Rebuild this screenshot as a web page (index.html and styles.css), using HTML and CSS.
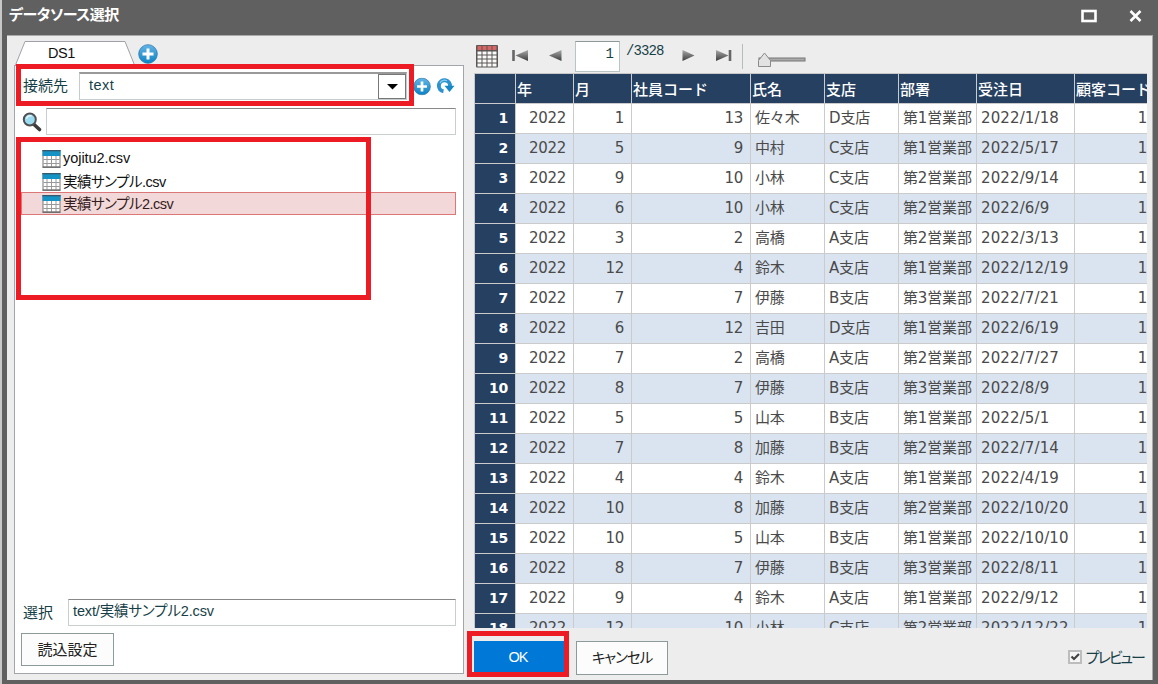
FILE: index.html
```html
<!DOCTYPE html>
<html lang="ja">
<head>
    <meta charset="UTF-8">
    <title>データソース選択</title>
    <link rel="stylesheet" href="styles.css">
</head>
<body>

<svg class="defs" width="0" height="0">
    <defs>
        <linearGradient id="blue" x1="0" y1="0" x2="0" y2="1">
            <stop offset="0" stop-color="#66b4e6"/>
            <stop offset="1" stop-color="#0a83c4"/>
        </linearGradient>
        <linearGradient id="gray" x1="0" y1="0" x2="0" y2="1">
            <stop offset="0" stop-color="#aaa"/>
            <stop offset="1" stop-color="#3c3c3c"/>
        </linearGradient>
        <symbol id="plus" viewBox="0 0 20 20">
            <circle cx="10" cy="10" r="9.3" fill="url(#blue)" stroke="#2878ae" stroke-width="0.8"/>
            <path d="M10 4.5v11M4.5 10h11" stroke="#fff" stroke-width="3"/>
        </symbol>
        <symbol id="table" viewBox="0 0 18 18">
            <rect x="0.5" y="0.5" width="17" height="16.5" fill="#fff" stroke="#777"/>
            <rect x="0" y="0" width="18" height="6" fill="#1593c4"/>
            <rect x="0" y="0" width="18" height="1.3" fill="#35586a"/>
            <path d="M1 9.5h16M1 13.5h16M4.5 6v11M9 6v11M13.5 6v11" stroke="#999"/>
            <path d="M0 17.2h18" stroke="#555"/>
        </symbol>
    </defs>
</svg>

<div class="dialog">
    <div class="titlebar">
        <span class="title">データソース選択</span>
        <svg class="max" width="16" height="14"><rect x="1.5" y="2" width="13" height="10" fill="none" stroke="#fff" stroke-width="2.6"/></svg>
        <svg class="close" width="13" height="14"><path d="M1.5 2l10 10M11.5 2l-10 10" stroke="#fff" stroke-width="2.6"/></svg>
    </div>

    <div class="content">
        <div class="left">
            <div class="tabs">
                <div class="tab">
                    <svg width="120" height="25"><path d="M0.5 25L10 1.5H110L119.5 25" fill="#fff" stroke="#a0a0a8"/></svg>
                    <span>DS1</span>
                </div>
                <svg class="tab-add" width="20" height="20"><use href="#plus"/></svg>
            </div>

            <div class="panel">
                <div class="connect">
                    <span class="label">接続先</span>
                    <div class="select">
                        <span>text</span>
                        <div class="arrow"><svg width="11" height="6"><path d="M0 0h11L5.5 5.5z" fill="#000"/></svg></div>
                    </div>
                    <svg width="18" height="19" viewBox="0 0 20 20"><use href="#plus"/></svg>
                    <svg class="reload" width="19" height="18" viewBox="0 0 19 18">
                        <path d="M7.5 14.3A5.6 5.6 0 1 1 14 9.5" fill="none" stroke="#2d93cf" stroke-width="4"/>
                        <path d="M8.5 8.8h10l-5 6.2z" fill="#1688c8"/>
                        <path d="M4 6A5 5 0 0 1 11 3.8" fill="none" stroke="#8accf0" stroke-width="1.3"/>
                    </svg>
                </div>

                <div class="search">
                    <svg width="20" height="20" viewBox="0 0 20 20">
                        <path d="M11.5 12l6 5.5" stroke="#3c3c3c" stroke-width="3.6" stroke-linecap="round"/>
                        <circle cx="7.8" cy="7.5" r="6" fill="#9bdcf2" stroke="#505050" stroke-width="2"/>
                        <path d="M4.5 6.5a3.8 3.8 0 0 1 5-2.5" stroke="#e4f7fd" stroke-width="1.6" fill="none"/>
                    </svg>
                    <div class="input"></div>
                </div>

                <div class="files">
                    <div class="file"><svg width="19" height="18"><use href="#table"/></svg><span class="en">yojitu2.csv</span></div>
                    <div class="file"><svg width="19" height="18"><use href="#table"/></svg><span>実績サンプル.csv</span></div>
                    <div class="file selected"><svg width="19" height="18"><use href="#table"/></svg><span>実績サンプル2.csv</span></div>
                </div>

                <div class="chosen">
                    <span class="label">選択</span>
                    <div class="input">text/実績サンプル2.csv</div>
                </div>
                <div class="button load">読込設定</div>
            </div>
        </div>

        <div class="right">
            <div class="toolbar">
                <svg class="grid-icon" width="22" height="23" viewBox="0 0 22 23">
                    <rect x="0" y="0" width="22" height="22.5" rx="1" fill="#5d5656"/>
                    <path d="M1.5 3h19" stroke="#d66565" stroke-width="4" stroke-dasharray="4 1"/>
                    <path d="M1.5 8h19M1.5 12h19M1.5 16h19M1.5 20h19" stroke="#fafafa" stroke-width="3" stroke-dasharray="4 1"/>
                </svg>
                <svg class="first" width="17" height="13"><path d="M1.5 1v11" stroke="#666" stroke-width="2.6"/><path d="M16 1v11L3.5 6.5z" fill="url(#gray)"/></svg>
                <svg class="prev" width="13" height="13"><path d="M12.5 1v11L0 6.5z" fill="url(#gray)"/></svg>
                <div class="page">1</div>
                <span class="total">/3328</span>
                <svg class="next" width="13" height="13"><path d="M0.5 1v11L12.5 6.5z" fill="url(#gray)"/></svg>
                <svg class="last" width="17" height="13"><path d="M15 1v11" stroke="#666" stroke-width="2.6"/><path d="M1 1v11L13.5 6.5z" fill="url(#gray)"/></svg>
                <div class="sep"></div>
                <svg class="slider" width="50" height="17" viewBox="0 0 50 17">
                    <rect x="2" y="6" width="46" height="3" fill="#aaa" stroke="#777"/>
                    <path d="M7.5 1L13.5 8.500V14.5H1.500V8.500z" fill="#e2e2e2" stroke="#8a8a8a"/>
                </svg>
            </div>

            <div class="grid" id="grid">
                <div class="row head">
                    <div></div><div>年</div><div>月</div><div>社員コード</div><div>氏名</div><div>支店</div><div>部署</div><div>受注日</div><div>顧客コード</div>
                </div>
            </div>

            <div class="footer">
                <div class="button ok">OK</div>
                <div class="button cancel"><span>キャンセル</span></div>
                <div class="preview">
                    <svg width="14" height="14"><rect x="1" y="1" width="12" height="12" fill="#f6f6f6" stroke="#bdbdbd" stroke-width="2"/><path d="M3.5 6.5l2.5 2.5 5-5" fill="none" stroke="#444" stroke-width="2.2"/></svg>
                    <span>プレビュー</span>
                </div>
            </div>
        </div>
    </div>

    <div class="mark mark-connect"></div>
    <div class="mark mark-files"></div>
    <div class="mark mark-ok"></div>
</div>

<script>
    // 月, 社員コード, 氏名, 支店, 部署, 受注日
    const rows = [
        [1, 13, '佐々木', 'D', 1, '1/18'],
        [5, 9, '中村', 'C', 1, '5/17'],
        [9, 10, '小林', 'C', 2, '9/14'],
        [6, 10, '小林', 'C', 2, '6/9'],
        [3, 2, '高橋', 'A', 2, '3/13'],
        [12, 4, '鈴木', 'A', 1, '12/19'],
        [7, 7, '伊藤', 'B', 3, '7/21'],
        [6, 12, '吉田', 'D', 1, '6/19'],
        [7, 2, '高橋', 'A', 2, '7/27'],
        [8, 7, '伊藤', 'B', 3, '8/9'],
        [5, 5, '山本', 'B', 1, '5/1'],
        [7, 8, '加藤', 'B', 2, '7/14'],
        [4, 4, '鈴木', 'A', 1, '4/19'],
        [10, 8, '加藤', 'B', 2, '10/20'],
        [10, 5, '山本', 'B', 1, '10/10'],
        [8, 7, '伊藤', 'B', 3, '8/11'],
        [9, 4, '鈴木', 'A', 1, '9/12'],
        [12, 10, '小林', 'C', 2, '12/22']
    ];

    const grid = document.getElementById('grid');
    rows.forEach((r, i) => {
        const row = document.createElement('div');
        row.className = 'row';
        const cells = [i + 1, 2022, r[0], r[1], r[2], r[3] + '支店', '第' + r[4] + '営業部', '2022/' + r[5], 1];
        cells.forEach(c => {
            const cell = document.createElement('div');
            cell.textContent = c;
            if (typeof c === 'number') cell.className = 'num';
            row.appendChild(cell);
        });
        grid.appendChild(row);
    });
</script>

</body>
</html>
```

FILE: styles.css
```css
* {
    box-sizing: border-box;
}
body {
    margin: 0;
    width: 1158px;
    height: 684px;
    overflow: hidden;
    font-family: "Liberation Sans", "Noto Sans CJK JP", sans-serif;
    font-size: 15px;
    color: #173f48;
}
svg {
    display: block;
    flex: none;
}
.defs {
    position: absolute;
}
.dialog {
    position: relative;
    height: 684px;
    background-color: #606060;
    border-left: 2px solid #c8c8c8;
    padding: 0 5px 4px;
    display: flex;
    flex-direction: column;
}
.titlebar {
    height: 35px;
    display: flex;
    padding: 0 11px 0 2px;
    color: #fff;
}
.title {
    flex: 1;
    font-weight: bold;
    line-height: 30px;
    font-feature-settings: "palt";
    letter-spacing: -0.5px;
}
.max {
    margin: 9px 32px 0 0;
}
.close {
    margin-top: 9px;
}
.content {
    flex: 1;
    min-height: 0;
    display: flex;
    background-color: #ededed;
    border-top: 1px solid #aaa;
    border-right: 1px solid #aaa;
}

/* left side */
.left {
    width: 457px;
    padding: 4px 0 6px 7px;
    display: flex;
    flex-direction: column;
}
.tabs {
    display: flex;
    height: 25px;
}
.tab {
    display: grid;
    width: 120px;
    margin-left: 1px;
}
.tab > * {
    grid-area: 1 / 1;
}
.tab span {
    padding-left: 33px;
    line-height: 27px;
    font-size: 14.5px;
    letter-spacing: -0.5px;
    color: #111;
}
.tab-add {
    margin: 4px 0 0 3px;
}
.panel {
    flex: 1;
    display: flex;
    flex-direction: column;
    background-color: #fff;
    border: 1px solid #a2a5aa;
    padding: 6px 7px 7px 6px;
}
.connect {
    display: flex;
    height: 28px;
}
.label {
    padding-left: 2px;
    line-height: 28px;
}
.select {
    display: flex;
    width: 328px;
    height: 28px;
    margin: 0 6px 0 11px;
    border: 1px solid #c5cccc;
    border-top: 2px solid #999;
    line-height: 22px;
    justify-content: space-between;
    padding-left: 9px;
    font-size: 14.5px;
}
.select span {
    letter-spacing: 0.5px;
}
.arrow {
    width: 28px;
    border: 1px solid #777;
    display: flex;
    align-items: center;
    justify-content: center;
}
.connect > svg {
    margin-top: 5px;
}
.connect .reload {
    margin-left: 5px;
}
.search {
    display: flex;
    margin-top: 8px;
}
.search svg {
    margin: 4px 4px 0 1px;
}
.input {
    flex: 1;
    height: 27px;
    border: 1px solid #c9cfcf;
    border-top: 1px solid #888;
    line-height: 23px;
    padding-left: 4px;
    font-feature-settings: "palt";
    font-size: 14.5px;
    letter-spacing: -0.15px;
}
.files {
    flex: 1;
    padding-top: 12px;
    color: #111;
}
.file {
    display: flex;
    height: 22.7px;
    align-items: center;
    padding: 1px 0 0 21px;
    font-feature-settings: "palt";
    letter-spacing: -0.5px;
}
.file span {
    position: relative;
    top: -1px;
    padding-left: 2px;
    font-size: 14.5px;
}
.file .en {
    letter-spacing: -0.05px;
}
.selected {
    background-color: #f2d8d8;
    border: 1px solid #dc7777;
    padding: 0 0 0 20px;
    color: #351c20;
}
.chosen {
    display: flex;
    height: 28px;
    margin-bottom: 7px;
}
.chosen .input {
    margin: 1px 0 0 15px;
}
.chosen .label {
    line-height: 30px;
}
.button {
    width: 93px;
    height: 33px;
    border: 1px solid #8d9a9a;
    background-color: #fcfcfc;
    color: #222;
    text-align: center;
    line-height: 31px;
}

/* right side */
.right {
    flex: 1;
    min-width: 0;
    padding: 0 5px 0 10px;
    display: flex;
    flex-direction: column;
}
.toolbar {
    display: flex;
    height: 37px;
    align-items: flex-start;
}
.grid-icon {
    margin: 9px 0 0 2px;
}
.first {
    margin: 13px 0 0 14px;
}
.prev {
    margin: 13px 0 0 20px;
}
.page {
    width: 45px;
    height: 31px;
    margin: 5px 0 0 13px;
    border: 1px solid #b9c5c5;
    border-top-color: #8d9999;
    background-color: #fff;
    text-align: right;
    padding-right: 5px;
    line-height: 24px;
    font-family: "Liberation Mono", monospace;
    font-size: 14px;
}
.total {
    width: 37px;
    margin-left: 6px;
    line-height: 31px;
    font-family: "Liberation Mono", monospace;
    font-size: 14px;
    letter-spacing: -0.9px;
}
.next {
    margin: 13px 0 0 19px;
}
.last {
    margin: 13px 0 0 20px;
}
.sep {
    width: 1px;
    height: 25px;
    margin: 8px 0 0 10px;
    background-color: #b5bcbc;
}
.slider {
    margin: 16px 0 0 14px;
}
.grid {
    height: 555px;
    overflow: hidden;
    border-top: 1px solid #c8c8c8;
    border-left: 1px solid #c8c8c8;
    font-family: "DejaVu Sans", "Noto Sans CJK JP", sans-serif;
    color: #4a4a4a;
}
.row {
    display: grid;
    grid-template-columns: 41px 58px 58px 119px 74px 74px 78px 98px 72px;
    height: 30px;
    background-color: #fff;
}
.row:nth-child(odd) {
    background-color: #dae4f0;
}
.row > div {
    border-right: 1px solid #cbcbcb;
    border-bottom: 1px solid #cbcbcb;
    padding-left: 4px;
    line-height: 29px;
    font-size: 15px;
    white-space: nowrap;
    overflow: hidden;
    letter-spacing: -0.15px;
}
.row > div:nth-child(8) {
    letter-spacing: 0.12px;
}
.row > .num {
    text-align: right;
    padding-right: 7px;
    letter-spacing: -0.3px;
}
.row > div:last-child {
    border-right: none;
}
.row > .num:last-child {
    padding-right: 0;
}
.row > div:first-child {
    background-color: #264061;
    color: #fff;
    font-weight: bold;
    font-size: 14px;
}
.row.head {
    background-color: #264061;
    color: #fff;
}
.head > div {
    padding-left: 1px;
    font-weight: 500;
    line-height: 32px;
}
.row.head > div {
    padding-left: 1px;
    line-height: 32px;
    letter-spacing: 0;
}
.footer {
    display: flex;
    flex: 1;
    padding-top: 13px;
}
.ok {
    background-color: #0078d7;
    border: none;
    color: #fff;
    line-height: 33px;
    font-size: 14.5px;
    letter-spacing: -1px;
    height: 32px;
    padding-right: 5px;
    margin-right: 9px;
}
.cancel {
    height: 34px;
    width: 92px;
    line-height: 32px;
    font-size: 14.5px;
    font-feature-settings: "palt";
    letter-spacing: -1.1px;
}
.preview {
    display: flex;
    margin: 9px 3px 0 auto;
    line-height: 15px;
    font-feature-settings: "palt";
    letter-spacing: -2px;
}
.preview span {
    padding-left: 4px;
}

/* highlight frames */
.mark {
    position: absolute;
    border: 5px solid #ed1c24;
}
.mark-connect {
    left: 14px;
    top: 64px;
    width: 398px;
    height: 42px;
}
.mark-files {
    left: 14px;
    top: 137px;
    width: 355px;
    height: 163px;
}
.mark-ok {
    left: 465px;
    top: 631px;
    width: 102px;
    height: 46px;
}
```
